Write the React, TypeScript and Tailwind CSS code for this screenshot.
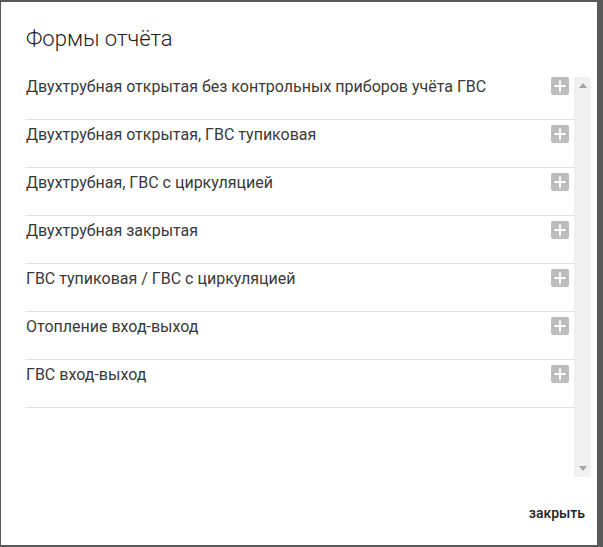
import React from "react";

const items = [
  "Двухтрубная открытая без контрольных приборов учёта ГВС",
  "Двухтрубная открытая, ГВС тупиковая",
  "Двухтрубная, ГВС с циркуляцией",
  "Двухтрубная закрытая",
  "ГВС тупиковая / ГВС с циркуляцией",
  "Отопление вход-выход",
  "ГВС вход-выход",
];

function Plus() {
  return (
    <div className="w-[18px] h-[18px] rounded-[2px] bg-[#bdbdbd] flex items-center justify-center shrink-0">
      <svg width="12" height="12" viewBox="0 0 12 12">
        <rect x="5" y="0.5" width="2" height="11" fill="#fff" />
        <rect x="0.5" y="5" width="11" height="2" fill="#fff" />
      </svg>
    </div>
  );
}

export default function App() {
  return (
    <div
      className="w-[603px] h-[547px] bg-[#595959] pt-[2px] pl-[1px] overflow-hidden"
      style={{ fontFamily: "Roboto, 'Noto Sans', sans-serif" }}
    >
      <div className="w-[596px] h-[543px] bg-white flex flex-col">
        <div className="pl-[25px] pt-[23px] h-[75px] text-[22px] leading-[28px] font-light text-[#222]">
          Формы отчёта
        </div>
        <div className="ml-[25px] flex h-[400px] w-[565px]">
          <div className="flex-1 flex flex-col">
            {items.map((t, i) => (
              <div
                key={i}
                className={
                  i === 0
                    ? "flex justify-between items-start h-[43px] border-b border-[#e0e0e0]"
                    : "flex justify-between items-start h-[48px] pt-[5px] border-b border-[#e0e0e0]"
                }
              >
                <span className="text-[16px] leading-[20px] text-[#3a3a3a]">{t}</span>
                <div className="mr-[5px]">
                  <Plus />
                </div>
              </div>
            ))}
          </div>
          <div className="w-[17px] bg-[#f0f0f0] flex flex-col justify-between items-center py-[6px]">
            <svg width="8" height="5" viewBox="0 0 8 5">
              <polygon points="0,5 8,5 4,0" fill="#a3a3a3" />
            </svg>
            <svg width="8" height="5" viewBox="0 0 8 5">
              <polygon points="0,0 8,0 4,5" fill="#a3a3a3" />
            </svg>
          </div>
        </div>
        <div className="flex justify-end pr-[12px] pt-[27px]">
          <span className="text-[14px] leading-[18px] font-medium text-[#222]">закрыть</span>
        </div>
      </div>
    </div>
  );
}
